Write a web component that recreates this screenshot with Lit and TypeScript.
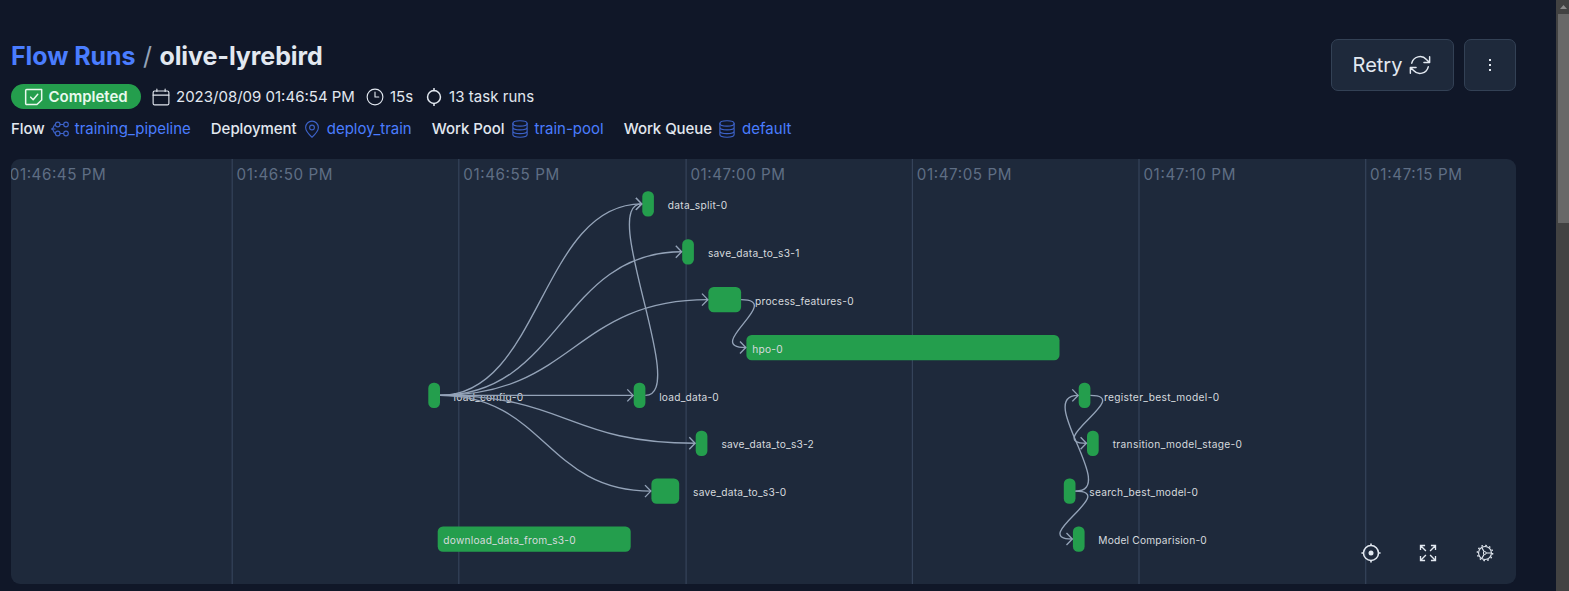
import { LitElement, html, svg, css } from "lit";
import { customElement } from "lit/decorators.js";

interface Run { label: string; x: number; end: number; row: number; lx: number; lw: number; }

const runs: Record<string, Run> = {
  split: { label: "data_split-0", x: 642.3, end: 653.9, row: 0, lx: 667.8, lw: 59.4 },
  save1: { label: "save_data_to_s3-1", x: 682.2, end: 693.9, row: 1, lx: 707.9, lw: 91.4 },
  process: { label: "process_features-0", x: 708.4, end: 741.1, row: 2, lx: 755, lw: 98.6 },
  hpo: { label: "hpo-0", x: 746.4, end: 1059.5, row: 3, lx: 752.3, lw: 30.3 },
  config: { label: "load_config-0", x: 428.3, end: 440, row: 4, lx: 453.6, lw: 69.6 },
  load: { label: "load_data-0", x: 633.7, end: 645.4, row: 4, lx: 659.2, lw: 59.6 },
  register: { label: "register_best_model-0", x: 1078.7, end: 1090.4, row: 4, lx: 1103.9, lw: 115.2 },
  save2: { label: "save_data_to_s3-2", x: 695.7, end: 707.4, row: 5, lx: 721.4, lw: 92.4 },
  stage: { label: "transition_model_stage-0", x: 1087, end: 1098.7, row: 5, lx: 1112.7, lw: 129.3 },
  save0: { label: "save_data_to_s3-0", x: 651.4, end: 679.2, row: 6, lx: 693.1, lw: 93.2 },
  search: { label: "search_best_model-0", x: 1063.8, end: 1075.5, row: 6, lx: 1089.3, lw: 108.6 },
  download: { label: "download_data_from_s3-0", x: 437.7, end: 630.7, row: 7, lx: 443.3, lw: 132.4 },
  compare: { label: "Model Comparision-0", x: 1072.9, end: 1084.6, row: 7, lx: 1098.3, lw: 108.4 },
};

const edges: [string, string][] = [
  ["config", "split"], ["config", "save1"], ["config", "process"], ["config", "load"],
  ["config", "save2"], ["config", "save0"], ["load", "split"], ["process", "hpo"],
  ["register", "stage"], ["search", "register"], ["search", "compare"],
];

const ticks = [
  { x: 5.3, t: "01:46:45 PM", w: 96 }, { x: 232.1, t: "01:46:50 PM", w: 96 }, { x: 458.7, t: "01:46:55 PM", w: 96 },
  { x: 686, t: "01:47:00 PM", w: 94.5 }, { x: 912.3, t: "01:47:05 PM", w: 94.7 }, { x: 1138.9, t: "01:47:10 PM", w: 92 },
  { x: 1365.6, t: "01:47:15 PM", w: 92 },
];

const rowTop = (r: number) => 191.3 + r * 47.87;
const rowMid = (r: number) => rowTop(r) + 12.6;

const icon = (size: number, body: unknown, width = 1.5) => html`<svg class="icon" width=${size} height=${size}
  viewBox="0 0 24 24" fill="none" stroke="currentColor" stroke-width=${width}
  stroke-linecap="round" stroke-linejoin="round">${body}</svg>`;

const doneIcon = svg`<path d="M3.200 3h18v12.500L15.500 21H3.200A1.200 1.200 0 0 1 2 19.800V4.200A1.200 1.200 0 0 1 3.200 3z"/><path d="m8 12.200 3 3 5.500-6.400"/>`;
const calendarIcon = svg`<rect x="1.500" y="4" width="21" height="18.500" rx="2"/><path d="M1.500 9.500h21M6.500 1.500v3M17.500 1.500v3"/>`;
const clockIcon = svg`<circle cx="12" cy="12" r="10.500"/><path d="M12 5.500V12h5"/>`;
const taskIcon = svg`<circle cx="12" cy="12" r="8.600"/><path d="M12 .5v3M12 20.500v3"/>`;
const flowIcon = svg`<circle cx="9" cy="6" r="3.100"/><circle cx="20" cy="6" r="3.100"/><circle cx="9" cy="18" r="3.100"/><circle cx="20" cy="18" r="3.100"/><path d="M12.100 6h4.800M12.100 18h4.800M5.900 6C2.500 6.500 4.500 12 .5 12 4.500 12 2.500 17.500 5.900 18M.5 12h5"/>`;
const pinIcon = svg`<path d="M12 23c4.500-4.200 8.500-8.200 8.500-13A8.500 8.500 0 0 0 3.500 10c0 4.800 4 8.800 8.500 13z"/><circle cx="12" cy="10" r="3.200"/>`;
const poolIcon = svg`<ellipse cx="12" cy="4.600" rx="9.500" ry="3.600"/><path d="M2.500 4.600v14.800c0 2 4 3.600 9.500 3.600s9.500-1.600 9.500-3.600V4.600M2.500 9.600c0 2 4 3.600 9.500 3.600s9.500-1.600 9.500-3.600M2.500 14.500c0 2 4 3.600 9.500 3.600s9.500-1.600 9.500-3.600"/>`;
const retryIcon = svg`<path d="M16.300 9.300h6.200V3.100M7.700 14.700H1.500v6.200M3 10a9.300 9.300 0 0 1 16-4l3.400 3.300M21 14a9.300 9.300 0 0 1-16 4l-3.400-3.300"/>`;
const targetIcon = svg`<circle cx="12" cy="12" r="9"/><circle cx="12" cy="12" r="3" fill="currentColor" stroke="none"/><path d="M12 .5v2.500M12 21v2.500M.5 12h2.500M21 12h2.500"/>`;
const expandIcon = svg`<path d="M3 8.500V3h5.500M3 3l6.500 6.500M15.500 3H21v5.500M21 3l-6.500 6.500M3 15.500V21h5.500M3 21l6.500-6.500M21 15.500V21h-5.500M21 21l-6.500-6.500"/>`;
const cogIcon = svg`<circle cx="12" cy="12" r="8.600"/><circle cx="12" cy="12" r="10.200" stroke-dasharray="2.200 3.141" stroke-width="1.800"/><path d="M13.500 12h7M11 10.500 7.700 4.700M11 13.500 7.700 19.300"/><circle cx="11.700" cy="12" r="1.900" stroke-width="1.300"/>`;

@customElement("run-timeline")
export class RunTimeline extends LitElement {
  static styles = css`
    :host { display: block; width: 1504.500px; height: 425px; border-radius: 9px; overflow: hidden; background: #1e293b; }
    .canvas { display: block; width: 1504.500px; height: 425px; }
    .grid { fill: #35435a; }
    .time { fill: #5f6e84; font: 400 15.200px Inter, sans-serif; }
    .edge { fill: none; stroke: #94a3b8; stroke-width: 1.350; }
    .node { fill: #249e4d; }
    .label { fill: #d6dade; font: 400 10.200px Inter, sans-serif; }
    .tool { color: #e2e8f0; }
  `;

  edge([from, to]: [string, string]) {
    const a = runs[from], b = runs[to];
    const x1 = a.end, x2 = b.x - 0.6, y1 = rowMid(a.row), y2 = rowMid(b.row);
    const d = Math.max((x2 - x1) / 2, 44);
    return svg`<path class="edge" d="M${x1} ${y1}C${x1 + d} ${y1} ${x2 - d} ${y2} ${x2} ${y2}"/>
      <path class="edge" d="M${x2 - 5.8} ${y2 - 6}L${x2} ${y2}L${x2 - 5.8} ${y2 + 6}"/>`;
  }

  tool(x: number, size: number, width: number, body: unknown) {
    return svg`<svg class="tool" x=${x - size / 2} y=${553 - size / 2} width=${size} height=${size} viewBox="0 0 24 24"
      fill="none" stroke="currentColor" stroke-width=${width}>${body}</svg>`;
  }

  render() {
    return html`<svg class="canvas" viewBox="11 159 1504.500 425">
      ${ticks.map((k) => svg`<rect class="grid" x=${k.x - 0.5} y="159" width="1.200" height="425"/>
        <text class="time" x=${k.x + 4.5} y="180.300" textLength=${k.w}>${k.t}</text>`)}
      ${Object.values(runs).map((r) => svg`<rect class="node" x=${r.x} y=${rowTop(r.row)} width=${r.end - r.x} height="25.300" rx="5.300"/>`)}
      ${Object.values(runs).map((r) => svg`<text class="label" x=${r.lx} y=${rowMid(r.row) + 5.2} textLength=${r.lw}>${r.label}</text>`)}
      ${edges.map((e) => this.edge(e))}
      ${this.tool(1371, 20, 1.9, targetIcon)}
      ${this.tool(1428, 20, 1.6, expandIcon)}
      ${this.tool(1485, 18, 1.5, cogIcon)}
    </svg>`;
  }
}

@customElement("app-root")
export class AppRoot extends LitElement {
  static styles = css`
    :host { display: flex; width: 1569px; height: 591px; overflow: hidden; background: #101728; color: #e2e8f0; font: 400 15px/20px Inter, sans-serif; }
    .page { flex: 1; min-width: 0; padding: 39px 0 0 11px; box-sizing: border-box; }
    .head { display: flex; justify-content: space-between; width: 1504.500px; height: 120px; }
    .title { display: flex; gap: 7.500px; height: 34px; line-height: 34px; font-size: 25px; font-weight: 700; letter-spacing: -0.080px; white-space: nowrap; }
    .crumb { color: #4a7dff; }
    .slash { color: #94a3b8; font-weight: 400; }
    .meta { display: flex; align-items: center; height: 26px; margin-top: 10.500px; white-space: nowrap; }
    .item { display: flex; align-items: center; gap: 6px; margin-left: 11px; }
    .item.tasks { gap: 6px; margin-left: 12px; letter-spacing: 0.040px; }
    .badge { display: flex; align-items: center; gap: 4.500px; box-sizing: border-box; width: 130px; height: 25px; padding-left: 13px; border-radius: 13px; background: #249e4d; color: #e9f9ee; font-weight: 600; }
    .links { display: flex; gap: 20px; margin-top: 9px; height: 20px; white-space: nowrap; }
    .group { display: flex; align-items: center; gap: 6.400px; }
    .name { font-weight: 500; letter-spacing: -0.060px; }
    .link { display: flex; align-items: center; gap: 5.700px; color: #4a7dff; }
    .link .icon { color: #3c62c8; }
    .icon { display: block; flex: none; }
    .actions { display: flex; gap: 10px; }
    .btn { display: flex; align-items: center; justify-content: center; gap: 7px; box-sizing: border-box; height: 52px; border: 1px solid #334155; border-radius: 7px; background: #1e293b; font-size: 20px; }
    .retry { width: 123px; }
    .more { width: 52px; }
    .bar { flex: none; display: flex; flex-direction: column; align-items: flex-end; width: 13px; background: #424242; }
    .up { display: block; width: 11px; height: 14px; }
    .thumb { width: 11px; height: 209px; background: #686868; }
  `;

  link(name: string, body: unknown, text: string) {
    return html`<div class="group"><span class="name">${name}</span><span class="link">${icon(18, body)}<span>${text}</span></span></div>`;
  }

  render() {
    return html`
      <div class="page">
        <div class="head">
          <div>
            <div class="title"><span class="crumb">Flow Runs</span><span class="slash">/</span><span>olive-lyrebird</span></div>
            <div class="meta">
              <span class="badge">${icon(20, doneIcon, 1.8)}<span>Completed</span></span>
              <span class="item">${icon(18, calendarIcon)}<span>2023/08/09 01:46:54 PM</span></span>
              <span class="item">${icon(18, clockIcon)}<span>15s</span></span>
              <span class="item tasks">${icon(18, taskIcon, 2)}<span>13 task runs</span></span>
            </div>
            <div class="links">
              ${this.link("Flow", flowIcon, "training_pipeline")}
              ${this.link("Deployment", pinIcon, "deploy_train")}
              ${this.link("Work Pool", poolIcon, "train-pool")}
              ${this.link("Work Queue", poolIcon, "default")}
            </div>
          </div>
          <div class="actions">
            <div class="btn retry"><span>Retry</span>${icon(22, retryIcon, 1.6)}</div>
            <div class="btn more"><svg class="icon" width="4" height="14" viewBox="0 0 4 14" fill="currentColor"><rect x="1" y="1" width="2" height="2"/><rect x="1" y="6" width="2" height="2"/><rect x="1" y="11" width="2" height="2"/></svg></div>
          </div>
        </div>
        <run-timeline></run-timeline>
      </div>
      <div class="bar">
        <svg class="up" viewBox="0 0 11 14"><path d="M2 9 5.500 5 9 9z" fill="#8c8c8c"/></svg>
        <div class="thumb"></div>
      </div>`;
  }
}
